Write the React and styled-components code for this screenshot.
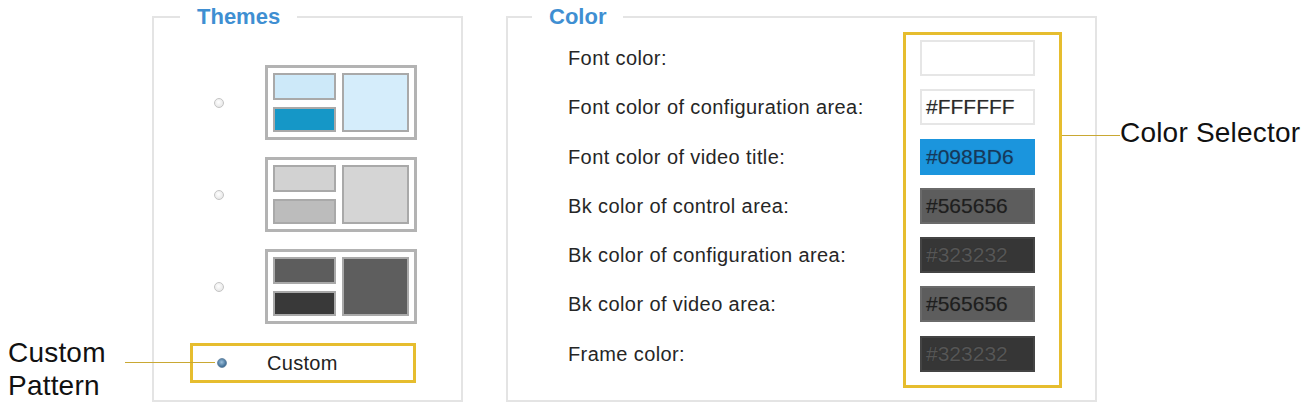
import React from 'react'
import styled, { createGlobalStyle } from 'styled-components'

const GlobalStyle = createGlobalStyle`
  html, body {
    margin: 0;
    padding: 0;
    background: #fff;
  }
  body {
    font-family: Arial, "Liberation Sans", sans-serif;
    color: #2b2b2b;
  }
`

const Page = styled.div`
  width: 1303px;
  height: 404px;
  display: flex;
  align-items: stretch;
  padding-top: 4px;
  padding-bottom: 2px;
  box-sizing: border-box;
  position: relative;
`

const SideNote = styled.div`
  width: ${p => p.$width}px;
  flex-shrink: 0;
  position: relative;
  display: flex;
  flex-direction: column;
  justify-content: ${p => p.$justify};
  padding: ${p => p.$pad};
  box-sizing: border-box;
  font-size: 28px;
  line-height: 33px;
  color: #111;
`

const NoteText = styled.div`
  letter-spacing: 0.2px;
`

const Connector = styled.div`
  position: absolute;
  height: 1px;
  background: #c9a833;
  left: ${p => p.$left}px;
  top: ${p => p.$top}px;
  width: ${p => p.$width}px;
`

const Panel = styled.fieldset`
  margin: 0 ${p => p.$gap}px 0 0;
  padding: ${p => p.$pad};
  border: 2px solid #e4e4e4;
  width: ${p => p.$width}px;
  box-sizing: border-box;
  flex-shrink: 0;
  min-width: 0;
`

const Legend = styled.legend`
  margin-left: ${p => p.$indent}px;
  padding: 0 17px;
  font-size: 22px;
  line-height: 26px;
  font-weight: bold;
  color: #3f8fd2;
`

const ThemeList = styled.div`
  display: flex;
  flex-direction: column;
  gap: 17px;
  margin-top: 35px;
`

const ThemeRow = styled.label`
  display: flex;
  align-items: center;
  margin-left: 36px;
  padding-left: 24px;
  height: 75px;
`

const Radio = styled.span`
  width: 10px;
  height: 10px;
  border-radius: 50%;
  box-sizing: border-box;
  flex-shrink: 0;
  border: 1px solid ${p => (p.$checked ? '#6b8aa6' : '#c4c4c4')};
  background: ${p =>
    p.$checked
      ? 'radial-gradient(circle at 45% 40%, #9cc0dc 0%, #3f6e96 70%)'
      : 'radial-gradient(circle at 45% 40%, #ffffff 0%, #e6e6e6 80%)'};
`

const Thumb = styled.div`
  margin-left: 41px;
  width: 152px;
  height: 75px;
  box-sizing: border-box;
  border: 3px solid #b3b3b3;
  padding: 5px;
  display: grid;
  grid-template-columns: 63px 1fr;
  grid-template-rows: 27px 1fr;
  column-gap: 6px;
  row-gap: 7px;
  background: #fff;
`

const Pane = styled.div`
  border: 2px solid #a9a9a9;
  background: ${p => p.$color};
  grid-row: ${p => (p.$tall ? '1 / 3' : 'auto')};
  grid-column: ${p => (p.$tall ? '2' : '1')};
`

const CustomRow = styled.label`
  margin-top: 19px;
  margin-left: 36px;
  width: 226px;
  height: 40px;
  box-sizing: border-box;
  border: 3px solid #e6bd2e;
  display: flex;
  align-items: center;
  padding-left: 24px;
  font-size: 20px;
  color: #222;
`

const CustomText = styled.span`
  margin-left: 40px;
  letter-spacing: 0.3px;
`

const ColorLayout = styled.div`
  display: flex;
  align-items: flex-start;
  margin-top: 2px;
`

const LabelColumn = styled.div`
  width: 335px;
  padding: 8px 0 0 60px;
  box-sizing: content-box;
  display: flex;
  flex-direction: column;
  gap: 13.3px;
`

const FieldLabel = styled.div`
  height: 36px;
  line-height: 36px;
  font-size: 20px;
  letter-spacing: 0.4px;
  color: #262626;
  white-space: nowrap;
`

const Selector = styled.div`
  width: 159px;
  box-sizing: border-box;
  border: 3px solid #e6bd2e;
  padding: 5px 0 13px 14px;
  display: flex;
  flex-direction: column;
  gap: 13.3px;
`

const Swatch = styled.div`
  width: 115px;
  height: 36px;
  box-sizing: border-box;
  border: 2px solid ${p => p.$border};
  background: ${p => p.$bg};
  padding-left: 4px;
  font-size: 21px;
  line-height: 32px;
  color: ${p => p.$ink};
  text-shadow: 0 0 1px rgba(0, 0, 0, 0.25);
`

const themes = [
  { top: '#cde9f9', bottom: '#1597c7', side: '#d5edfb' },
  { top: '#d2d2d2', bottom: '#bcbcbc', side: '#d5d5d5' },
  { top: '#5d5d5d', bottom: '#393939', side: '#5e5e5e' },
]

const colorFields = [
  { label: 'Font color:', value: '', bg: '#ffffff', border: '#e6e6e6', ink: '#222' },
  { label: 'Font color of configuration area:', value: '#FFFFFF', bg: '#ffffff', border: '#e6e6e6', ink: '#2a2a2a' },
  { label: 'Font color of video title:', value: '#098BD6', bg: '#1b95dd', border: '#1b95dd', ink: '#17385a' },
  { label: 'Bk color of control area:', value: '#565656', bg: '#5d5d5d', border: '#6a6a6a', ink: '#1e1e1e' },
  { label: 'Bk color of configuration area:', value: '#323232', bg: '#363636', border: '#444', ink: '#565656' },
  { label: 'Bk color of video area:', value: '#565656', bg: '#5d5d5d', border: '#6a6a6a', ink: '#1e1e1e' },
  { label: 'Frame color:', value: '#323232', bg: '#363636', border: '#444', ink: '#565656' },
]

const App = () => (
  <>
    <GlobalStyle />
    <Page>
      <SideNote $width={152} $justify="flex-end" $pad="0 0 0 8px">
        <NoteText>Custom</NoteText>
        <NoteText>Pattern</NoteText>
      </SideNote>
      <Connector $left={125} $top={362} $width={90} />

      <Panel $width={311} $gap={43} $pad="0 0 13px 0">
        <Legend $indent={26}>Themes</Legend>
        <ThemeList>
          {themes.map((t, i) => (
            <ThemeRow key={i}>
              <Radio />
              <Thumb>
                <Pane $color={t.top} />
                <Pane $color={t.side} $tall />
                <Pane $color={t.bottom} />
              </Thumb>
            </ThemeRow>
          ))}
        </ThemeList>
        <CustomRow>
          <Radio $checked />
          <CustomText>Custom</CustomText>
        </CustomRow>
      </Panel>

      <Panel $width={591} $gap={0} $pad="0 0 10px 0">
        <Legend $indent={24}>Color</Legend>
        <ColorLayout>
          <LabelColumn>
            {colorFields.map(f => (
              <FieldLabel key={f.label}>{f.label}</FieldLabel>
            ))}
          </LabelColumn>
          <Selector>
            {colorFields.map(f => (
              <Swatch key={f.label} $bg={f.bg} $border={f.border} $ink={f.ink}>
                {f.value}
              </Swatch>
            ))}
          </Selector>
        </ColorLayout>
      </Panel>

      <SideNote $width={206} $justify="flex-start" $pad="112px 0 0 23px">
        <NoteText>Color Selector</NoteText>
      </SideNote>
      <Connector $left={1062} $top={135} $width={58} />
    </Page>
  </>
)

export default App
